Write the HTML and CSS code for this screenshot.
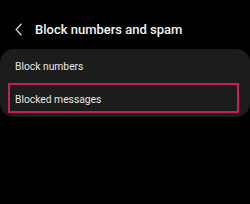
FILE: index.html
```html
<!DOCTYPE html>
<html lang="en">
<head>
    <meta charset="UTF-8">
    <meta name="viewport" content="width=device-width, initial-scale=1.0">
    <title>Block numbers and spam</title>
    <link rel="stylesheet" href="styles.css">
</head>
<body>
    <header class="top-bar">
        <svg class="back-icon" width="8" height="13" viewBox="0 0 8 13">
            <path d="M6.5 0.8 L1.2 6.5 L6.5 12.2" fill="none" stroke="#d8d8d8" stroke-width="1.3"/>
        </svg>
        <h1>Block numbers and spam</h1>
    </header>

    <div class="card">
        <div class="row">Block numbers</div>
        <div class="row selected">Blocked messages</div>
    </div>
</body>
</html>
```

FILE: styles.css
```css
* {
    margin: 0;
    padding: 0;
    box-sizing: border-box;
}

body {
    background: #000;
    color: #e6e6e6;
    font-family: Roboto, sans-serif;
    width: 250px;
    height: 204px;
    overflow: hidden;
}

.top-bar {
    height: 49px;
    display: flex;
    align-items: center;
    padding: 10px 0 0 15px;
}

.back-icon {
    margin-right: 12px;
}

.top-bar h1 {
    font-size: 13px;
    font-weight: 500;
    color: #f2f2f2;
}

.card {
    background: #1c1c1c;
    border-radius: 14px;
    padding-bottom: 4px;
}

.row {
    height: 34px;
    display: flex;
    align-items: center;
    padding-left: 15px;
    font-size: 10.3px;
}

.row.selected {
    height: 30px;
    margin: 0 11px 0 8px;
    padding: 3px 0 0 5px;
    border: 2px solid #c41f5a;
}
```
